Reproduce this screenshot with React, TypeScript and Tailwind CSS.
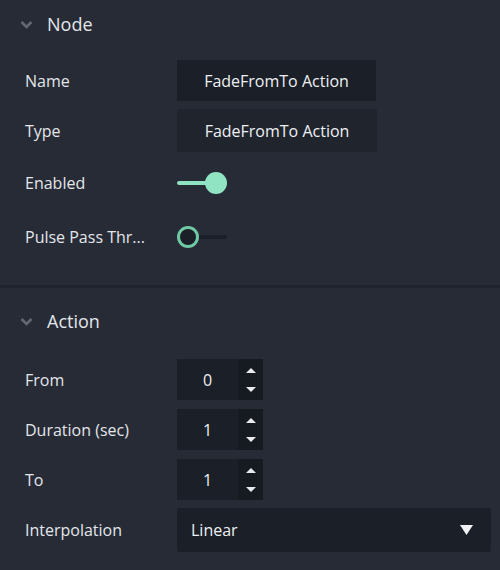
import { useState } from 'react'

const font = { fontFamily: '"Open Sans", "Noto Sans", "Liberation Sans", sans-serif' }

function Chevron() {
  return (
    <svg width="13" height="9" viewBox="0 0 13 9" className="shrink-0">
      <path d="M1.5 2 L6.5 7 L11.5 2" fill="none" stroke="#636873" strokeWidth="2.6" />
    </svg>
  )
}

function SectionHeader({ title, className = '' }: { title: string; className?: string }) {
  return (
    <div className={`flex items-center gap-[14px] pl-[20px] ${className}`}>
      <Chevron />
      <span className="text-[18px] text-[#e4e6ea] leading-none">{title}</span>
    </div>
  )
}

function Row({ label, children, className = '' }: { label: string; children?: React.ReactNode; className?: string }) {
  return (
    <div className={`flex items-center ${className}`}>
      <div className="w-[177px] pl-[25px] text-[16px] text-[#e4e6ea] whitespace-nowrap">{label}</div>
      {children}
    </div>
  )
}

function Toggle({ on }: { on: boolean }) {
  if (on) {
    return (
      <div className="flex items-center">
        <div className="h-[4px] w-[30px] rounded-full bg-[#8fe2c2]" />
        <div className="-ml-[2px] h-[22px] w-[22px] rounded-full bg-[#90e4c4]" />
      </div>
    )
  }
  return (
    <div className="flex items-center">
      <div className="z-10 h-[22px] w-[22px] rounded-full border-[3px] border-[#6fc9a4] bg-[#1b1f27]" />
      <div className="-ml-[2px] h-[4px] w-[30px] rounded-full bg-[#1b1f27]" />
    </div>
  )
}

function Spinner({ value }: { value: string }) {
  return (
    <div className="flex h-[41px] w-[86px] bg-[#1b1f27]">
      <div className="flex flex-1 items-center justify-center text-[16px] text-[#eef0f3]">{value}</div>
      <div className="flex w-[25px] flex-col items-center justify-center gap-[14px] bg-[#161a21]">
        <svg width="10" height="5" viewBox="0 0 10 5"><path d="M0 5 L5 0 L10 5 Z" fill="#e8eaee" /></svg>
        <svg width="10" height="5" viewBox="0 0 10 5"><path d="M0 0 L5 5 L10 0 Z" fill="#e8eaee" /></svg>
      </div>
    </div>
  )
}

export default function App() {
  const [interp] = useState('Linear')
  return (
    <div className="flex h-[570px] w-[500px] flex-col overflow-hidden bg-[#262b36]" style={font}>
      {/* Node section */}
      <SectionHeader title="Node" className="h-[48px]" />
      <Row label="Name" className="mt-[12px] h-[41px]">
        <div className="flex h-[41px] w-[199px] items-center justify-center bg-[#1b1f27] text-[16px] text-[#eef0f3]">
          FadeFromTo Action
        </div>
      </Row>
      <Row label="Type" className="mt-[8px] h-[43px]">
        <div className="flex h-[43px] w-[200px] items-center justify-center bg-[#20242d] text-[16px] text-[#eef0f3]">
          FadeFromTo Action
        </div>
      </Row>
      <Row label="Enabled" className="mt-[10px] h-[42px]">
        <Toggle on />
      </Row>
      <Row label="Pulse Pass Thr..." className="mt-[12px] h-[42px]">
        <Toggle on={false} />
      </Row>
      <div className="mt-[27px] h-[3px] bg-[#1f232c]" />

      {/* Action section */}
      <SectionHeader title="Action" className="mt-[15px] h-[36px]" />
      <Row label="From" className="mt-[20px] h-[41px]">
        <Spinner value="0" />
      </Row>
      <Row label="Duration (sec)" className="mt-[9px] h-[41px]">
        <Spinner value="1" />
      </Row>
      <Row label="To" className="mt-[9px] h-[41px]">
        <Spinner value="1" />
      </Row>
      <Row label="Interpolation" className="mt-[8px] h-[44px]">
        <div className="flex h-[44px] w-[314px] items-center justify-between rounded-[3px] bg-[#1b1f27] pl-[14px] pr-[18px] text-[16px] text-[#eef0f3]">
          <span>{interp}</span>
          <svg width="13" height="10" viewBox="0 0 13 10"><path d="M0 0 L13 0 L6.5 10 Z" fill="#f2f3f6" /></svg>
        </div>
      </Row>
    </div>
  )
}
